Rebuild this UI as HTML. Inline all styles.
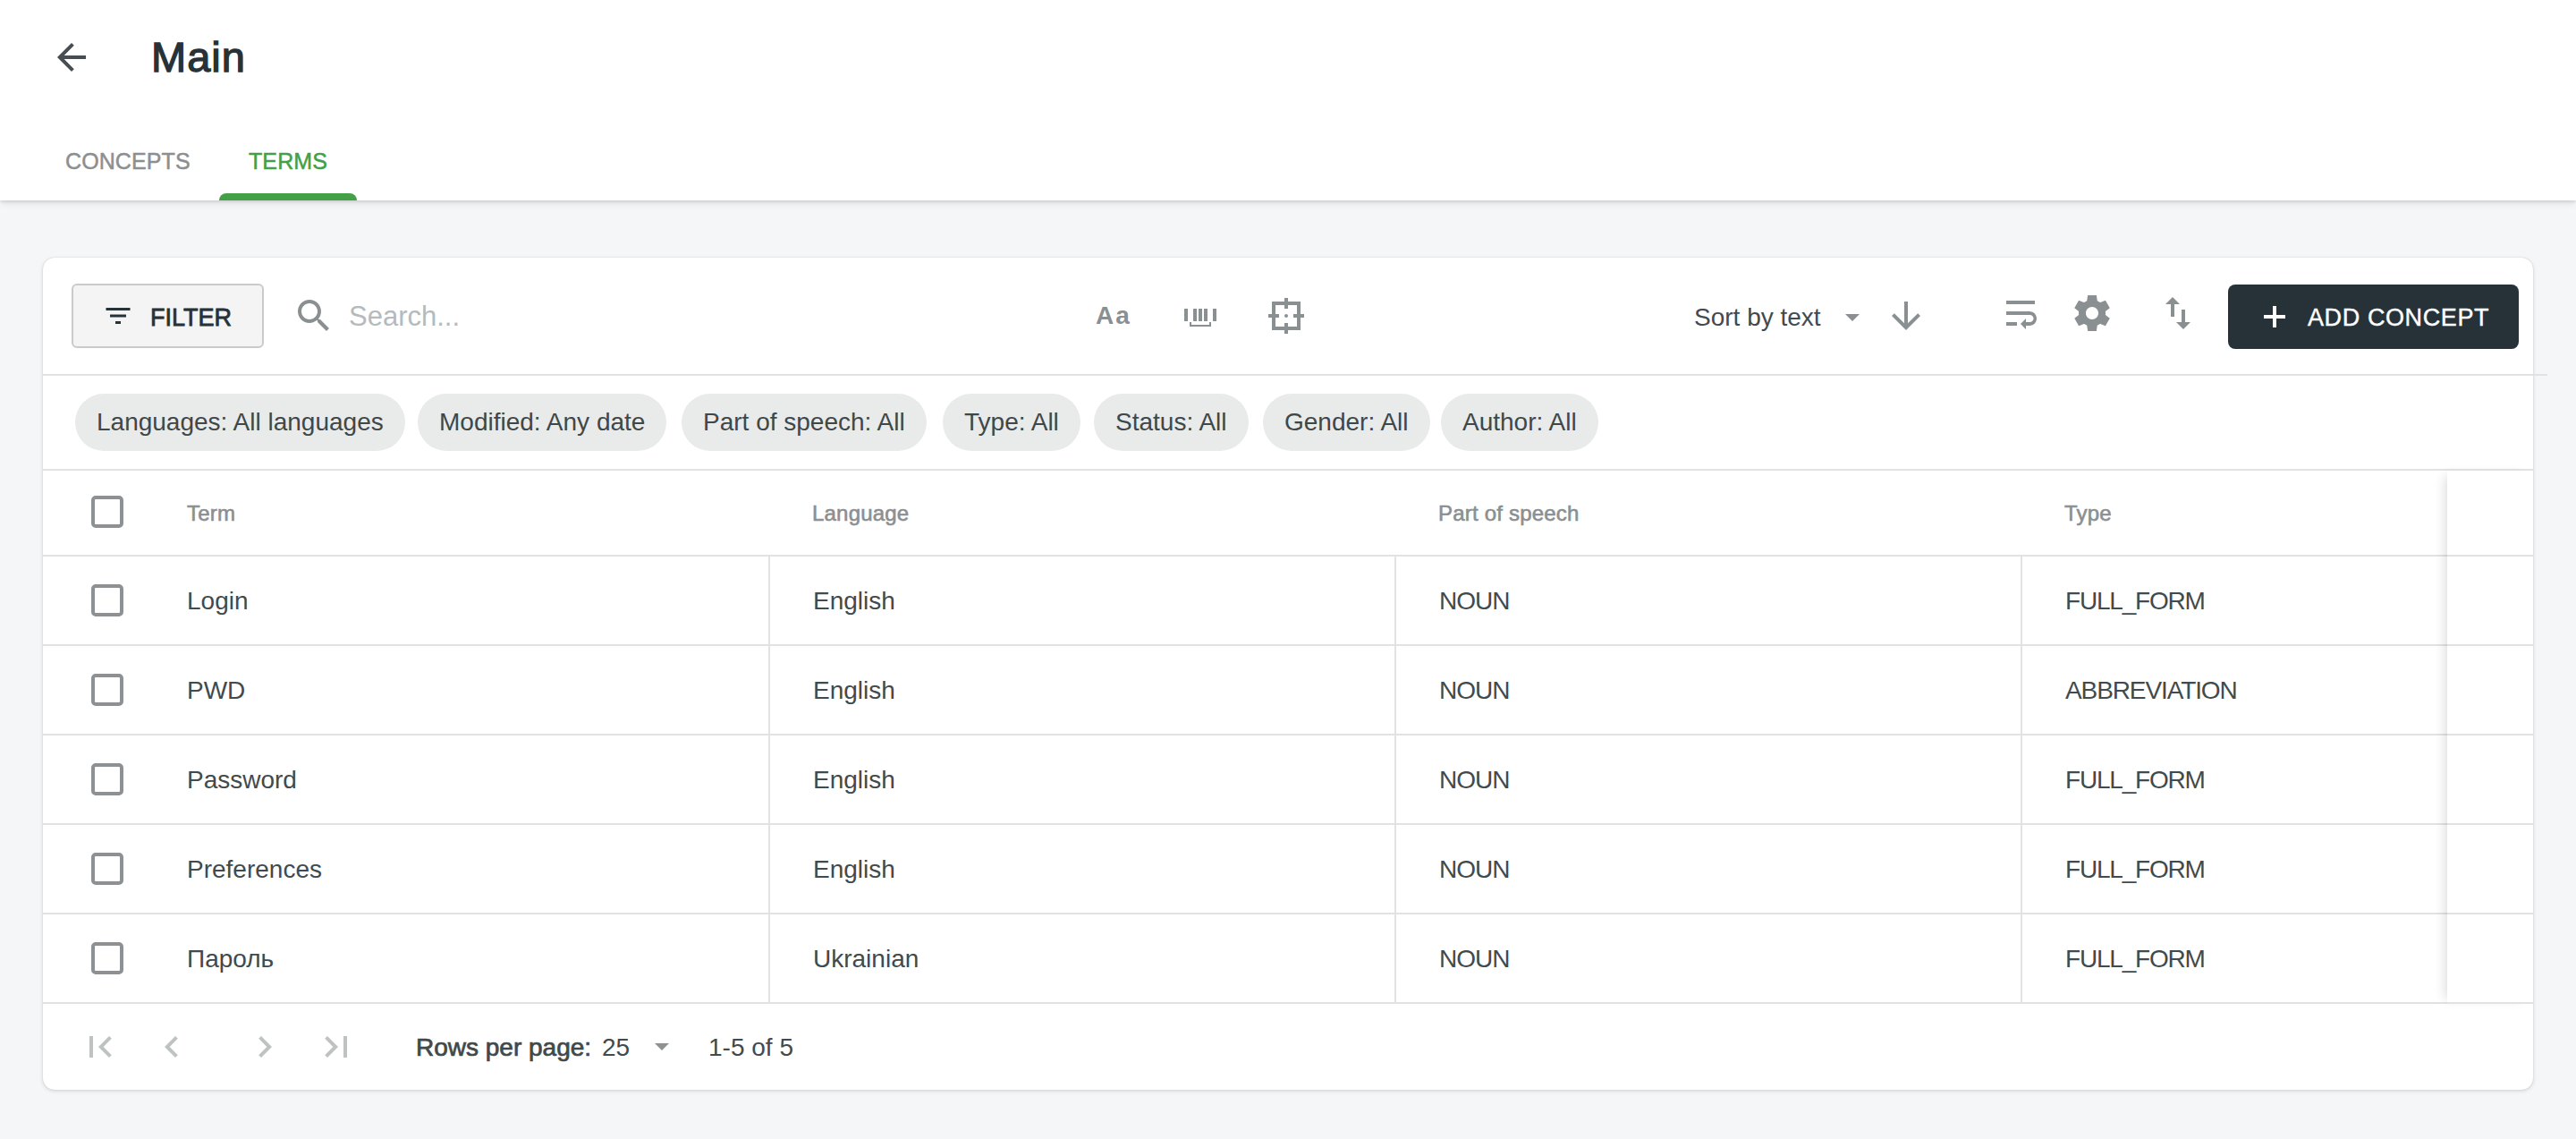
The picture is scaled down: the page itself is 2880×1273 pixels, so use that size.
<!DOCTYPE html>
<html><head><meta charset="utf-8">
<style>
*{box-sizing:border-box;margin:0;padding:0}
html,body{width:2880px;height:1273px;overflow:hidden;background:#f4f6f8;font-family:"Liberation Sans",sans-serif;}
.abs{position:absolute}
.t{position:absolute;white-space:nowrap;line-height:1}
#hdr{position:absolute;left:0;top:0;width:2880px;height:224px;background:#fff;box-shadow:0 2px 3px rgba(0,0,0,.1),0 6px 8px -2px rgba(0,0,0,.07);z-index:2}
#card{position:absolute;left:48px;top:287px;width:2784px;height:931px}
#cardbg{position:absolute;left:48px;top:288px;width:2784px;height:930px;background:#fff;border-radius:13px;box-shadow:0 0 1px rgba(0,0,0,.2),0 1px 4px rgba(0,0,0,.12),0 2px 6px rgba(0,0,0,.03)}
.hl{position:absolute;height:2px;background:#e1e2e2}
.vl{position:absolute;width:2px;background:#e1e2e2}
.chip{position:absolute;top:153px;height:64px;border-radius:32px;background:#e9eaea;color:#3e4849;font-size:28px;line-height:64px;padding:0 24px;white-space:nowrap}
.cb{position:absolute;width:36px;height:36px;border:4px solid #8d9193;border-radius:5px}
.cell{position:absolute;font-size:28px;color:#414a4c;white-space:nowrap;line-height:1}
.hd{position:absolute;font-size:24px;color:#8b8f91;letter-spacing:0.2px;-webkit-text-stroke:0.6px #8b8f91;white-space:nowrap;line-height:1}
svg{position:absolute;display:block}
</style></head><body>
<div id="hdr">
  <svg style="left:56px;top:40px" width="48" height="48" viewBox="0 0 24 24"><path fill="#474e51" d="M20 11H7.83l5.59-5.59L12 4l-8 8 8 8 1.41-1.41L7.83 13H20v-2z"/></svg>
  <div class="t" style="left:169px;top:40px;font-size:47px;color:#263238;letter-spacing:1px;-webkit-text-stroke:1.3px #263238">Main</div>
  <div class="t" style="left:73px;top:168px;font-size:25px;color:#8c8f91;letter-spacing:0.1px;-webkit-text-stroke:0.5px #8c8f91">CONCEPTS</div>
  <div class="t" style="left:278px;top:168px;font-size:25px;color:#43a047;letter-spacing:0.1px;-webkit-text-stroke:0.5px #43a047">TERMS</div>
  <div class="abs" style="left:245px;top:216px;width:154px;height:8px;background:#43a047;border-radius:8px 8px 0 0"></div>
</div>

<div id="cardbg"></div>
<div id="card">
  <!-- toolbar (coords relative to card: x-48, y-287) -->
  <div class="abs" style="left:32px;top:30px;width:215px;height:72px;border:2px solid #c9caca;border-radius:6px;background:#f4f4f4"></div>
  <svg style="left:66px;top:48px" width="36" height="36" viewBox="0 0 24 24"><path fill="#263238" d="M10 18h4v-2h-4v2zM3 6v2h18V6H3zm3 7h12v-2H6v2z"/></svg>
  <div class="t" style="left:120px;top:55px;font-size:27px;color:#263238;-webkit-text-stroke:0.8px #263238">FILTER</div>
  <svg style="left:279px;top:42px" width="48" height="48" viewBox="0 0 24 24"><path fill="#8a8f91" d="M15.5 14h-.79l-.28-.27C15.41 12.59 16 11.11 16 9.5 16 5.91 13.09 3 9.5 3S3 5.91 3 9.5 5.91 16 9.5 16c1.61 0 3.09-.59 4.23-1.57l.27.28v.79l5 4.99L20.49 19l-4.99-5zm-6 0C7.01 14 5 11.99 5 9.5S7.01 5 9.5 5 14 7.01 14 9.5 11.99 14 9.5 14z"/></svg>
  <div class="t" style="left:342px;top:51px;font-size:31px;color:#b5babc">Search...</div>

  <div class="t" style="left:1177px;top:52px;font-size:28px;font-weight:bold;color:#8a8f91;letter-spacing:2px">Aa</div>
  <svg style="left:1276px;top:58px" width="36" height="20" viewBox="0 0 36 20"><g fill="#8a8f91"><rect x="0" y="0" width="4" height="14"/><rect x="10" y="0" width="4" height="14"/><rect x="16" y="0" width="4" height="14"/><rect x="22" y="0" width="4" height="14"/><rect x="32" y="0" width="4" height="14"/><path d="M6 15h2v3h20v-3h2v5H6z"/></g></svg>
  <svg style="left:1370px;top:46px" width="40" height="40" viewBox="0 0 40 40"><g fill="#8a8f91"><path d="M4 4h32v32H4zM8 8v24h24V8z"/><rect x="18" y="0" width="4" height="12"/><rect x="18" y="28" width="4" height="12"/><rect x="0" y="18" width="12" height="4"/><rect x="28" y="18" width="12" height="4"/><circle cx="20" cy="20" r="2"/></g></svg>

  <div class="t" style="left:1846px;top:54px;font-size:28px;color:#424a4d">Sort by text</div>
  <svg style="left:2015px;top:64px" width="16" height="8" viewBox="0 0 16 8"><path fill="#8a8f91" d="M0 0h16L8 8z"/></svg>
  <svg style="left:2059px;top:42px" width="48" height="48" viewBox="0 0 24 24"><path fill="#8a8f91" d="M20 12l-1.41-1.41L13 16.17V4h-2v12.17l-5.58-5.59L4 12l8 8 8-8z"/></svg>
  <svg style="left:2187px;top:39px" width="48" height="48" viewBox="0 0 24 24"><path fill="#8a8f91" d="M4 19h6v-2H4v2zM20 5H4v2h16V5zm-3 6H4v2h13.25c1.1 0 2 .9 2 2s-.9 2-2 2H15v-2l-3 3 3 3v-2h2c2.21 0 4-1.79 4-4s-1.79-4-4-4z"/></svg>
  <svg style="left:2267px;top:39px" width="48" height="48" viewBox="0 0 24 24"><path fill="#8a8f91" d="M19.44 12.99l-.01.02c.04-.33.08-.67.08-1.01 0-.34-.03-.66-.07-.99l.01.02 2.44-1.92-2.43-4.22-2.87 1.16.01.01c-.52-.4-1.09-.74-1.71-.99h.01L14.44 2H9.57l-.44 3.07h.01c-.62.25-1.19.59-1.71.99l.01-.01-2.88-1.17-2.44 4.22 2.44 1.92.01-.02c-.04.33-.07.65-.07.99 0 .34.03.68.08 1.01l-.01-.02-2.1 1.65-.33.26 2.43 4.2 2.88-1.15-.02-.04c.53.41 1.1.75 1.73 1h-.03L9.58 22h4.85s.03-.18.06-.42l.38-2.65h-.01c.62-.25 1.2-.59 1.73-1l-.02.04 2.88 1.15 2.43-4.2s-.14-.12-.33-.26l-2.11-1.67zM12 15.5c-1.93 0-3.5-1.57-3.5-3.5s1.57-3.5 3.5-3.5 3.5 1.57 3.5 3.5-1.57 3.5-3.5 3.5z"/></svg>
  <svg style="left:2363px;top:39px" width="48" height="48" viewBox="0 0 24 24"><path fill="#8a8f91" d="M16 17.01V10h-2v7.01h-3L15 21l4-3.99h-3zM9 3L5 6.99h3V14h2V6.99h3L9 3z"/></svg>

  <div class="abs" style="left:2443px;top:31px;width:325px;height:72px;background:#263238;border-radius:8px"></div>
  <div class="abs" style="left:2483px;top:55px;width:24px;height:4px;top:65px;background:#fff"></div><div class="abs" style="left:2493px;top:55px;width:4px;height:24px;background:#fff"></div>
  <div class="t" style="left:2532px;top:55px;font-size:27px;color:#fff;letter-spacing:0.6px;-webkit-text-stroke:0.4px #fff">ADD CONCEPT</div>

  <div class="hl" style="left:0;top:131px;width:2784px"></div>

  <div class="chip" style="left:36px">Languages: All languages</div>
  <div class="chip" style="left:419px">Modified: Any date</div>
  <div class="chip" style="left:714px">Part of speech: All</div>
  <div class="chip" style="left:1006px">Type: All</div>
  <div class="chip" style="left:1175px">Status: All</div>
  <div class="chip" style="left:1364px">Gender: All</div>
  <div class="chip" style="left:1563px">Author: All</div>

  <div class="hl" style="left:0;top:237px;width:2784px"></div>
  <!-- header row -->
  <div class="cb" style="left:54px;top:267px"></div>
  <div class="hd" style="left:161px;top:275px">Term</div>
  <div class="hd" style="left:860px;top:275px">Language</div>
  <div class="hd" style="left:1560px;top:275px">Part of speech</div>
  <div class="hd" style="left:2260px;top:275px">Type</div>
  <div class="hl" style="left:0;top:333px;width:2784px"></div>
  <div class="cb" style="left:54px;top:366px"></div>
  <div class="cell" style="left:161px;top:371px">Login</div>
  <div class="cell" style="left:861px;top:371px">English</div>
  <div class="cell" style="left:1561px;top:371px;letter-spacing:-1px">NOUN</div>
  <div class="cell" style="left:2261px;top:371px;letter-spacing:-1.2px">FULL_FORM</div>
  <div class="vl" style="left:811px;top:335px;height:98px"></div>
  <div class="vl" style="left:1511px;top:335px;height:98px"></div>
  <div class="vl" style="left:2211px;top:335px;height:98px"></div>
  <div class="hl" style="left:0;top:433px;width:2784px"></div>
  <div class="cb" style="left:54px;top:466px"></div>
  <div class="cell" style="left:161px;top:471px">PWD</div>
  <div class="cell" style="left:861px;top:471px">English</div>
  <div class="cell" style="left:1561px;top:471px;letter-spacing:-1px">NOUN</div>
  <div class="cell" style="left:2261px;top:471px;letter-spacing:-1.1px">ABBREVIATION</div>
  <div class="vl" style="left:811px;top:435px;height:98px"></div>
  <div class="vl" style="left:1511px;top:435px;height:98px"></div>
  <div class="vl" style="left:2211px;top:435px;height:98px"></div>
  <div class="hl" style="left:0;top:533px;width:2784px"></div>
  <div class="cb" style="left:54px;top:566px"></div>
  <div class="cell" style="left:161px;top:571px">Password</div>
  <div class="cell" style="left:861px;top:571px">English</div>
  <div class="cell" style="left:1561px;top:571px;letter-spacing:-1px">NOUN</div>
  <div class="cell" style="left:2261px;top:571px;letter-spacing:-1.2px">FULL_FORM</div>
  <div class="vl" style="left:811px;top:535px;height:98px"></div>
  <div class="vl" style="left:1511px;top:535px;height:98px"></div>
  <div class="vl" style="left:2211px;top:535px;height:98px"></div>
  <div class="hl" style="left:0;top:633px;width:2784px"></div>
  <div class="cb" style="left:54px;top:666px"></div>
  <div class="cell" style="left:161px;top:671px">Preferences</div>
  <div class="cell" style="left:861px;top:671px">English</div>
  <div class="cell" style="left:1561px;top:671px;letter-spacing:-1px">NOUN</div>
  <div class="cell" style="left:2261px;top:671px;letter-spacing:-1.2px">FULL_FORM</div>
  <div class="vl" style="left:811px;top:635px;height:98px"></div>
  <div class="vl" style="left:1511px;top:635px;height:98px"></div>
  <div class="vl" style="left:2211px;top:635px;height:98px"></div>
  <div class="hl" style="left:0;top:733px;width:2784px"></div>
  <div class="cb" style="left:54px;top:766px"></div>
  <div class="cell" style="left:161px;top:771px">Пароль</div>
  <div class="cell" style="left:861px;top:771px">Ukrainian</div>
  <div class="cell" style="left:1561px;top:771px;letter-spacing:-1px">NOUN</div>
  <div class="cell" style="left:2261px;top:771px;letter-spacing:-1.2px">FULL_FORM</div>
  <div class="vl" style="left:811px;top:735px;height:98px"></div>
  <div class="vl" style="left:1511px;top:735px;height:98px"></div>
  <div class="vl" style="left:2211px;top:735px;height:98px"></div>
  <div class="hl" style="left:0;top:833px;width:2784px"></div>
  <div class="abs" style="left:2688px;top:239px;width:96px;height:596px;background:transparent;box-shadow:-8px 0 12px -6px rgba(0,0,0,.15)"></div>
  <svg style="left:40px;top:859px" width="48" height="48" viewBox="0 0 24 24"><path fill="#bec2c2" d="M18.41 16.59L13.82 12l4.59-4.59L17 6l-6 6 6 6zM6 6h2v12H6z"/></svg>
  <svg style="left:120px;top:859px" width="48" height="48" viewBox="0 0 24 24"><path fill="#bec2c2" d="M15.41 7.41L14 6l-6 6 6 6 1.41-1.41L10.83 12z"/></svg>
  <svg style="left:224px;top:859px" width="48" height="48" viewBox="0 0 24 24"><path fill="#bec2c2" d="M10 6L8.59 7.41 13.17 12l-4.58 4.59L10 18l6-6z"/></svg>
  <svg style="left:304px;top:859px" width="48" height="48" viewBox="0 0 24 24"><path fill="#bec2c2" d="M5.59 7.41L10.18 12l-4.59 4.59L7 18l6-6-6-6zM16 6h2v12h-2z"/></svg>
  <div class="cell" style="left:417px;top:870px;-webkit-text-stroke:0.7px #3d4548">Rows per page:</div>
  <div class="cell" style="left:625px;top:870px">25</div>
  <svg style="left:684px;top:879px" width="16" height="8" viewBox="0 0 16 8"><path fill="#8e9293" d="M0 0h16L8 8z"/></svg>
  <div class="cell" style="left:744px;top:870px">1-5 of 5</div>
</div>
<div class="hl" style="left:2832px;top:418px;width:16px"></div>
</body></html>
